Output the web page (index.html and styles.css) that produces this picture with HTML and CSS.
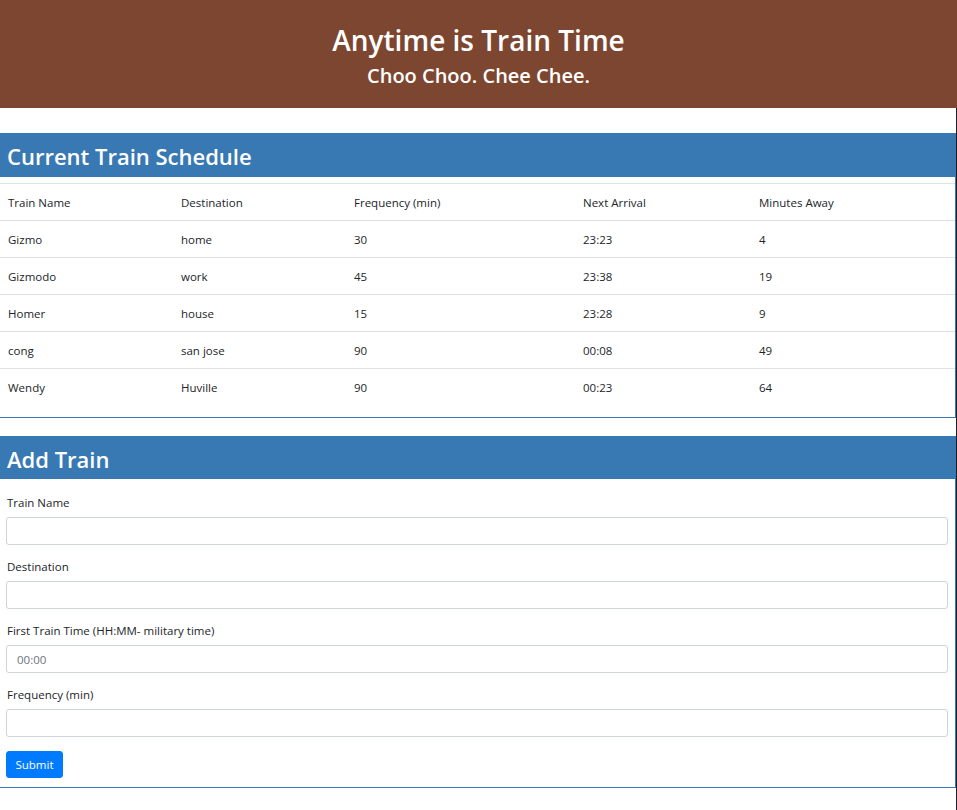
FILE: index.html
```html
<!DOCTYPE html>
<html lang="en">
<head>
<meta charset="utf-8">
<title>Train Scheduler</title>
<link rel="stylesheet" href="styles.css">
</head>
<body>
<header class="jumbo">
  <h1 class="jumbo-title">Anytime is Train Time</h1>
  <h2 class="jumbo-sub">Choo Choo. Chee Chee.</h2>
</header>
<main class="page">
  <section class="panel schedule">
    <h3 class="panel-heading">Current Train Schedule</h3>
    <table class="trains">
      <thead>
        <tr><th class="c1">Train Name</th><th class="c2">Destination</th><th class="c3">Frequency (min)</th><th class="c4">Next Arrival</th><th class="c5">Minutes Away</th></tr>
      </thead>
      <tbody>
        <tr><td>Gizmo</td><td>home</td><td>30</td><td>23:23</td><td>4</td></tr>
        <tr><td>Gizmodo</td><td>work</td><td>45</td><td>23:38</td><td>19</td></tr>
        <tr><td>Homer</td><td>house</td><td>15</td><td>23:28</td><td>9</td></tr>
        <tr><td>cong</td><td>san jose</td><td>90</td><td>00:08</td><td>49</td></tr>
        <tr><td>Wendy</td><td>Huville</td><td>90</td><td>00:23</td><td>64</td></tr>
      </tbody>
    </table>
  </section>
  <section class="panel add">
    <h3 class="panel-heading">Add Train</h3>
    <form class="train-form">
      <div class="group">
        <label class="lbl" for="name">Train Name</label>
        <input class="field" id="name" type="text">
      </div>
      <div class="group">
        <label class="lbl" for="dest">Destination</label>
        <input class="field" id="dest" type="text">
      </div>
      <div class="group">
        <label class="lbl" for="first">First Train Time (HH:MM- military time)</label>
        <input class="field" id="first" type="text" placeholder="00:00">
      </div>
      <div class="group">
        <label class="lbl" for="freq">Frequency (min)</label>
        <input class="field" id="freq" type="text">
      </div>
      <button class="submit" type="button">Submit</button>
    </form>
  </section>
</main>
</body>
</html>
```
FILE: styles.css
```css
* { box-sizing: border-box; }
html, body { margin: 0; padding: 0; }
body {
  font-family: "Open Sans", "Noto Sans", sans-serif;
  color: #212529;
  background: #fff;
  width: 957px;
  height: 810px;
  overflow: hidden;
}
.jumbo {
  background: #7d4630;
  color: #fff;
  height: 108px;
  text-align: center;
  padding-top: 20px;
}
.jumbo-title {
  margin: 0;
  font-size: 28px;
  font-weight: 600;
  line-height: 40px;
}
.jumbo-sub {
  margin: 0;
  font-size: 20px;
  font-weight: 600;
  line-height: 32px;
}
.page {
  border-right: 1px solid #1c1c24;
  height: 702px;
  padding-top: 25px;
}
.panel {
  border-right: 1px solid #3879b4;
  border-bottom: 1px solid #3879b4;
}
.panel-heading {
  margin: 0;
  background: #3879b4;
  color: #fff;
  font-size: 22px;
  font-weight: 600;
  height: 44px;
  line-height: 47px;
  padding-left: 7px;
}
.add .panel-heading { height: 43px; line-height: 47px; }
.schedule { margin-bottom: 18px; }
.trains {
  width: 100%;
  border-collapse: collapse;
  margin-top: 6px;
  margin-bottom: 11px;
  font-size: 11.5px;
}
.trains th, .trains td {
  text-align: left;
  font-weight: 400;
  height: 37px;
  padding: 0 0 0 8px;
  border-top: 1px solid #dee2e6;
  vertical-align: middle;
}
.c1 { width: 173px; }
.c2 { width: 173px; }
.c3 { width: 229px; }
.c4 { width: 176px; }
.train-form {
  padding: 15px 7px 9px 6px;
}
.group { margin-bottom: 13.25px; }
.lbl {
  display: block;
  font-size: 11.5px;
  line-height: 17px;
  margin-bottom: 6px;
  padding-left: 1px;
}
.field {
  display: block;
  width: 100%;
  height: 28px;
  border: 1px solid #ced4da;
  border-radius: 3px;
  padding: 0 10px;
  font-family: inherit;
  font-size: 11.5px;
  color: #495057;
}
.field::placeholder { color: #6c757d; }
.submit {
  display: block;
  margin-top: 0;
  width: 57px;
  height: 27px;
  background: #007bff;
  border: 1px solid #007bff;
  border-radius: 3px;
  color: #fff;
  font-family: inherit;
  font-size: 11.5px;
  padding: 0;
}
```
